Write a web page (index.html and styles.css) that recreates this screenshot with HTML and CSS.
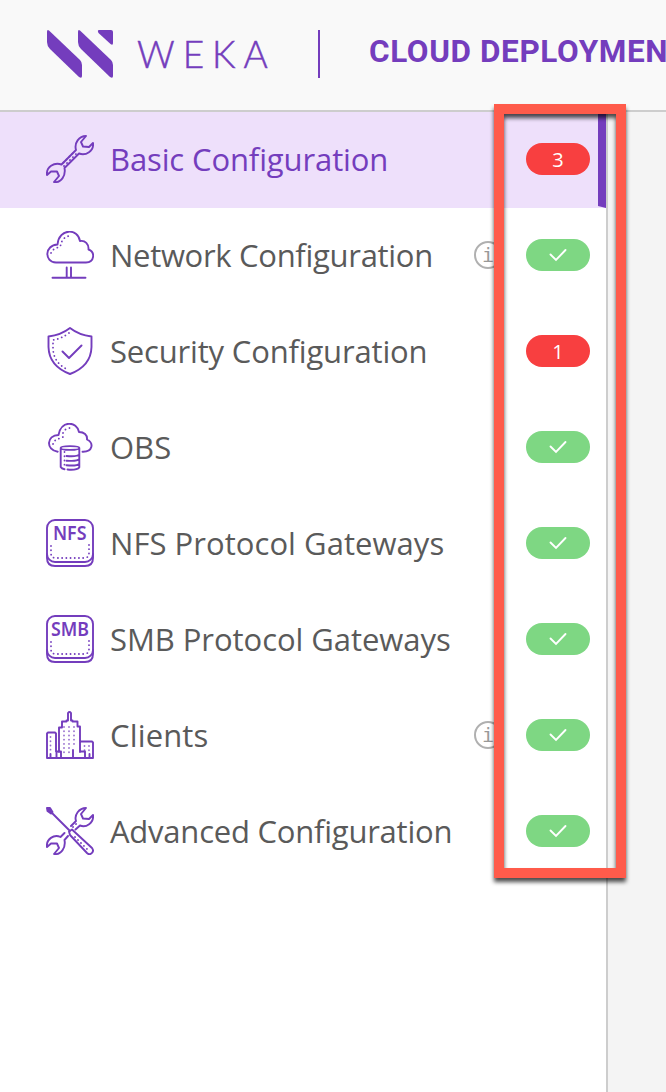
FILE: index.html
```html
<!DOCTYPE html>
<html lang="en">
<head>
<meta charset="utf-8">
<title>WEKA Cloud Deployment</title>
<link rel="stylesheet" href="styles.css">
</head>
<body>
<header class="header">
  <svg class="logo" viewBox="0 0 68 50" aria-hidden="true">
    <path d="M3 1.5 34 31Q36 33 36 36V47Q36 50 33 48L4 20Q1 17 1 13V3Q1 0 3 1.5Z"/>
    <path d="M34 1.5 65 31Q67 33 67 36V47Q67 50 64 48L35 20Q32 17 32 13V3Q32 0 34 1.5Z"/>
    <path d="M53 1H65Q67 1 67 3V14Q67 17 64.500 15L52.500 4Q51 1 53 1Z"/>
  </svg>
  <span class="wordmark">WEKA</span>
  <span class="divider"></span>
  <h1 class="title">CLOUD DEPLOYMENT</h1>
</header>
<div class="main">
<nav class="sidebar">
  <div class="item active">
    <svg class="icon" viewBox="0 0 48 48">
      <path d="M40 1C33 1 28 8 30 15L15.500 29.500C8 27 0 32 1 40L5 36.500 11 36.500 13 41 8 47C15 48 20 41 18.500 33L33 18.500C40 21 48 16 47 8L43 12 37 11.500 35 7Z"/>
      <path class="dots" d="M18 31 31 18M17.500 27.500 27 18"/>
    </svg>
    <span class="label basic">Basic Configuration</span>
    <span class="badge error">3</span>
  </div>
  <div class="item">
    <svg class="icon" viewBox="0 0 48 48">
      <path d="M10 31.500C-2 31 -1.500 14 11.500 13.500C13 -3 32 -3 34 10C39 9 43 13 42.500 18.500C49.500 21 48.500 31.500 40 31.500ZM20.700 36.500V46.500M25 36.500V46.500M6.500 46.800H39.500"/>
      <path class="dots" d="M5 22C7 17 12 17 14.500 15C15.500 8 20 5 24 5"/>
    </svg>
    <span class="label network">Network Configuration</span>
    <span class="info">i</span>
    <span class="badge"><svg class="check" viewBox="0 0 18 14"><path d="M1.500 6.500 7 12 16.500 2"/></svg></span>
  </div>
  <div class="item">
    <svg class="icon" viewBox="0 0 48 48">
      <path d="M24 1Q15 8 2.500 9.500V20Q3 39 24 47Q45 39 45.500 20V9.500Q33 8 24 1ZM16.500 24.500 23 31 35.500 18.500"/>
      <path class="dots" d="M23 6Q15 12 7 13V22Q8 37 23 43"/>
    </svg>
    <span class="label security">Security Configuration</span>
    <span class="badge error">1</span>
  </div>
  <div class="item">
    <svg class="icon" viewBox="0 0 48 48">
      <path d="M11.700 28.700C-.5 27 .5 12 12.500 12C15 -3 31 -2 33 9C38 9 41.500 12 41 16.500C48 20 47 29 36.500 28.700"/>
      <path d="M14.700 25V44C15.500 45.500 17 46 18.500 46.300M33.300 25V44.300C32 46 27 47 21.500 46.500M33.300 25C33.300 27.500 14.700 27.500 14.700 25S33.300 22.500 33.300 25M20.500 33C27 33.500 32 33 33.300 31.500M20.500 37.700C27 38.200 32 37.700 33.300 36.200M20.500 42.300C27 42.800 32 42.300 33.300 40.800"/>
      <path class="dots" d="M7 21C8 16 13 16 17 14V10C18 7 21 5 24 5M18.500 29V45"/>
    </svg>
    <span class="label obs">OBS</span>
    <span class="badge"><svg class="check" viewBox="0 0 18 14"><path d="M1.500 6.500 7 12 16.500 2"/></svg></span>
  </div>
  <div class="item">
    <svg class="icon" viewBox="0 0 48 48">
      <rect x="1" y="1" width="46" height="42" rx="8"/>
      <path d="M1 35V39Q1 47 9 47H39Q47 47 47 39V35"/>
      <path class="dots" d="M5 27V34Q5 39 10 39H38Q43 39 43 34V26"/>
      <text class="tag" x="7" y="20.500" textLength="33.500" lengthAdjust="spacingAndGlyphs">NFS</text>
    </svg>
    <span class="label nfs">NFS Protocol Gateways</span>
    <span class="badge"><svg class="check" viewBox="0 0 18 14"><path d="M1.500 6.500 7 12 16.500 2"/></svg></span>
  </div>
  <div class="item">
    <svg class="icon" viewBox="0 0 48 48">
      <rect x="1" y="1" width="46" height="42" rx="8"/>
      <path d="M1 35V39Q1 47 9 47H39Q47 47 47 39V35"/>
      <path class="dots" d="M5 27V34Q5 39 10 39H38Q43 39 43 34V26"/>
      <text class="tag" x="5" y="20.700" textLength="38" lengthAdjust="spacingAndGlyphs">SMB</text>
    </svg>
    <span class="label smb">SMB Protocol Gateways</span>
    <span class="badge"><svg class="check" viewBox="0 0 18 14"><path d="M1.500 6.500 7 12 16.500 2"/></svg></span>
  </div>
  <div class="item">
    <svg class="icon" viewBox="0 0 48 48">
      <path d="M1 47V22.500L2 21.500H9L10 22.500V40.500M1 47H47V31.500L46 30.500H34.500M13 41V16.500H16V10.500H20.500V9.500H22V2Q23.500 0 25 2V9.500H26.500V10.500H31.500V15.500H34V41M4.500 46V43M10.500 46V40.500H15V46M27 46V39M34 40.500H39V46M43.500 46V43"/>
      <path class="dots faint" d="M4.500 26V40M18 16V44M23 16V44M28 16V36M38.500 35V40M43 35V40"/>
    </svg>
    <span class="label clients">Clients</span>
    <span class="info">i</span>
    <span class="badge"><svg class="check" viewBox="0 0 18 14"><path d="M1.500 6.500 7 12 16.500 2"/></svg></span>
  </div>
  <div class="item">
    <svg class="icon" viewBox="0 0 48 48">
      <path class="solid" d="M1 1 4 1 6.500 5 5 6.500 1.500 4Z"/>
      <path d="M5 5 24 24M23 24.500 26 22.500 46 41C49 45 44 49 41 46L24 28Z"/>
      <path d="M25 19 30 14C28 8 33 1 40 1L35 7 37 11.500 43 12 47 8C48 16 40 21 34 18.500L29.500 22.500M22 29 18.500 33C20 41 15 48 8 47L13 41 11 36.500 5 36.500 1 40C0 32 8 27 14.500 30L18.500 26"/>
      <path class="dots" d="M29 30 42 43M27 20 31 16"/>
    </svg>
    <span class="label advanced">Advanced Configuration</span>
    <span class="badge"><svg class="check" viewBox="0 0 18 14"><path d="M1.500 6.500 7 12 16.500 2"/></svg></span>
  </div>
</nav>
</div>
<div class="highlight"></div>
</body>
</html>
```
FILE: styles.css
```css
* { box-sizing: border-box; }
body {
  margin: 0;
  height: 1092px;
  display: flex;
  flex-direction: column;
  overflow: hidden;
  position: relative;
  background: #f4f4f4;
  font-family: "Open Sans", "Noto Sans", sans-serif;
  color: #5a5a5a;
}
.header {
  height: 112px;
  flex: none;
  display: flex;
  align-items: center;
  padding: 0 0 3px 46px;
  background: #f9f9f9;
  border-bottom: 2px solid #cdcdcd;
  color: #743dbd;
  white-space: nowrap;
  overflow: hidden;
}
.logo { width: 68px; height: 50px; flex: none; fill: #743dbd; }
.wordmark {
  width: 181px;
  flex: none;
  margin-left: 23px;
  font: 300 37px/50px Lato, sans-serif;
  letter-spacing: 8px;
  -webkit-text-stroke: 0.5px #743dbd;
}
.divider { width: 2px; height: 48px; background: #743dbd; flex: none; }
.title {
  margin: 0 0 4px 49px;
  flex: none;
  font: 700 31.500px/48px Roboto, sans-serif;
  letter-spacing: 0.6px;
}
.main { flex: 1; display: flex; }
.sidebar { width: 608px; background: #fff; border-right: 2px solid #cdcdcd; }
.item {
  height: 96px;
  display: flex;
  align-items: center;
  padding: 0 16px 2px 46px;
}
.active {
  background: #eee0fb;
  color: #743dbd;
  padding-right: 8px;
  padding-bottom: 0;
  border-right: 8px solid #743dbd;
  border-bottom: 2px solid #eee0fb;
}
.icon {
  width: 48px;
  height: 48px;
  flex: none;
  fill: none;
  stroke: #743dbd;
  stroke-width: 1.9;
  stroke-linecap: round;
  stroke-linejoin: round;
}
.dots { stroke-width: 1.8; stroke-dasharray: 0.1 4.1; }
.faint { opacity: 0.75; }
.solid { fill: #743dbd; }
.tag { font: 600 20.500px "Noto Sans", sans-serif; fill: #743dbd; stroke: none; }
.label {
  margin: 0 0 0 16px;
  font-size: 31px;
  line-height: 44px;
  white-space: nowrap;
}
.basic { letter-spacing: -0.12px; }
.network { letter-spacing: -0.3px; }
.security { letter-spacing: -0.17px; }
.nfs { letter-spacing: 0.05px; }
.smb { letter-spacing: -0.05px; }
.clients { letter-spacing: 0.15px; }
.advanced { letter-spacing: -0.23px; }
.info {
  width: 28px;
  height: 28px;
  margin-left: auto;
  border: 2px solid #b0b0b0;
  border-radius: 50%;
  font: 20px/24px "DejaVu Sans Mono", monospace;
  text-align: center;
  color: #999;
}
.badge {
  width: 64px;
  height: 32px;
  margin-left: auto;
  display: flex;
  align-items: center;
  justify-content: center;
  border-radius: 16px;
  background: #7ed783;
  color: #fff;
  font-size: 20px;
  line-height: 32px;
}
.info + .badge { margin-left: 24px; }
.error { background: #f83f40; padding-top: 2px; }
.check {
  width: 18px;
  height: 14px;
  fill: none;
  stroke: #fff;
  stroke-width: 1.9;
  stroke-linecap: round;
}
.highlight {
  position: absolute;
  left: 494px;
  top: 104px;
  width: 132px;
  height: 774px;
  border: 10px solid #ff5b4b;
  filter: drop-shadow(0 4px 2px rgba(0, 0, 0, 0.7));
}
```
